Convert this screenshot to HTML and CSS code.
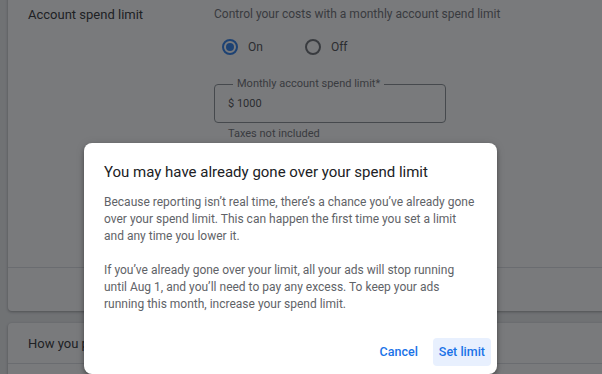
FILE: index.html
```html
<html>
<head>
    <link rel="stylesheet" href="styles.css">
</head>
<body>
    <div id="page">
        <div class="card first">
            <div class="row">
                <div class="row-title">Account spend limit</div>
                <div class="row-body">
                    <div class="hint">Control your costs with a monthly account spend limit</div>
                    <div class="radios">
                        <label class="radio checked"><span class="dot"></span>On</label>
                        <label class="radio"><span class="dot"></span>Off</label>
                    </div>
                    <div class="field">
                        <span class="field-label">Monthly account spend limit*</span>
                        <span class="field-value">$ 1000</span>
                    </div>
                    <div class="field-help">Taxes not included</div>
                </div>
            </div>
            <div class="card-foot"></div>
        </div>
        <div class="card second">
            <div class="row short">
                <div class="row-title">How you pay</div>
            </div>
            <div class="row short"></div>
        </div>
    </div>

    <div id="scrim"></div>

    <div id="dialog">
        <div class="dialog-title">You may have already gone over your spend limit</div>
        <p>Because reporting isn’t real time, there’s a chance you’ve already gone over your spend limit. This can happen the first time you set a limit and any time you lower it.</p>
        <p>If you’ve already gone over your limit, all your ads will stop running until Aug 1, and you’ll need to pay any excess. To keep your ads running this month, increase your spend limit.</p>
        <div class="dialog-actions">
            <span class="btn">Cancel</span>
            <span class="btn primary">Set limit</span>
        </div>
    </div>
</body>
</html>
```

FILE: styles.css
```css
html,
body {
    margin: 0px;
    width: 100%;
    height: 100%;
    overflow: hidden;
}

body {
    background: #e9ebec;
    font-family: Roboto, "Liberation Sans", sans-serif;
    color: #202124;
}

#page {
    padding-left: 8px;
    margin-top: -10px;
}

.card {
    width: 640px;
    background: #ffffff;
    border-radius: 4px;
    box-shadow: 0 1px 2px rgba(60, 64, 67, 0.3), 0 1px 3px 1px rgba(60, 64, 67, 0.15);
}

.card.second {
    margin-top: 12px;
}

.row {
    display: flex;
    padding: 17px 20px 0 20px;
    height: 278px;
    box-sizing: border-box;
    border-bottom: 1px solid #dadce0;
}

.row.short {
    height: 41px;
    padding-top: 0;
    align-items: center;
}

.card-foot {
    height: 43px;
}

.row-title {
    width: 186px;
    font-size: 13px;
}

.row-body {
    font-size: 12px;
    color: #5f6368;
}

.radios {
    display: flex;
    gap: 42px;
    margin: 18px 0 0 8px;
}

.radio {
    display: flex;
    align-items: center;
    gap: 10px;
    font-size: 12px;
    color: #3c4043;
}

.dot {
    width: 12px;
    height: 12px;
    border: 2px solid #5f6368;
    border-radius: 50%;
    position: relative;
}

.radio.checked .dot {
    border-color: #1a73e8;
}

.radio.checked .dot::after {
    content: "";
    position: absolute;
    left: 2px;
    top: 2px;
    width: 8px;
    height: 8px;
    border-radius: 50%;
    background: #1a73e8;
}

.field {
    position: relative;
    margin-top: 29px;
    width: 232px;
    height: 39px;
    box-sizing: border-box;
    border: 1px solid #80868b;
    border-radius: 4px;
    padding: 12px 0 0 13px;
}

.field-label {
    position: absolute;
    top: -8px;
    left: 18px;
    padding: 0 4px;
    background: #ffffff;
    font-size: 11px;
    color: #5f6368;
}

.field-value {
    font-size: 11px;
    color: #3c4043;
}

.field-help {
    font-size: 11px;
    margin: 4px 0 0 14px;
    color: #5f6368;
}

#scrim {
    position: absolute;
    left: 0;
    top: 0;
    width: 100%;
    height: 100%;
    background: rgba(32, 33, 36, 0.6);
}

#dialog {
    position: absolute;
    left: 84px;
    top: 143px;
    width: 413px;
    height: 231px;
    box-sizing: border-box;
    background: #ffffff;
    border-radius: 8px;
    padding: 20px 6px 0 20px;
    box-shadow: 0 4px 5px rgba(0, 0, 0, 0.14), 0 1px 10px rgba(0, 0, 0, 0.12), 0 2px 4px rgba(0, 0, 0, 0.2);
}

.dialog-title {
    font-size: 15px;
    color: #202124;
    margin-bottom: 13px;
}

#dialog p {
    margin: 0 14px 17px 0;
    font-size: 12px;
    line-height: 17px;
    color: #5f6368;
}

.dialog-actions {
    display: flex;
    justify-content: flex-end;
    margin-top: 25px;
}

.btn {
    font-size: 12.5px;
    font-weight: 500;
    color: #1a73e8;
    padding: 0 6px;
    height: 28px;
    line-height: 28px;
    border-radius: 4px;
}

.btn.primary {
    background: #e8f0fe;
    margin-left: 9px;
}
```
